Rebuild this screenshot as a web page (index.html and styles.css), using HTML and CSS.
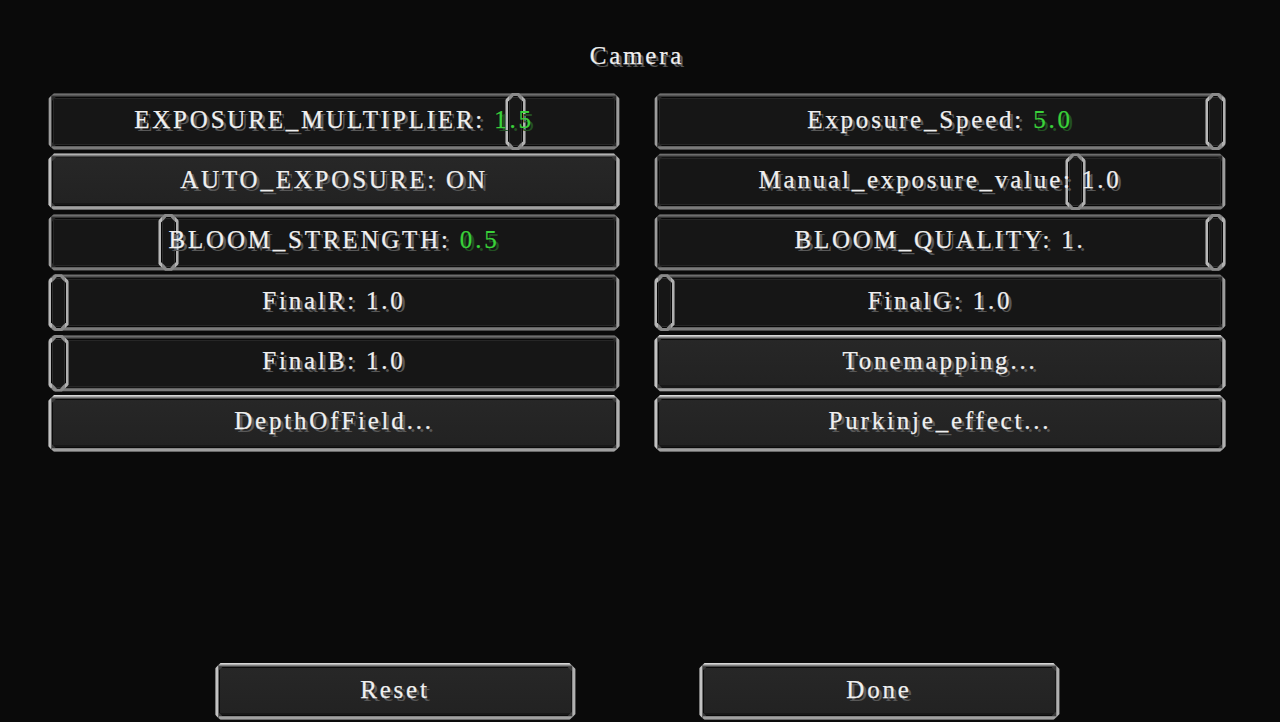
FILE: index.html
```html
<!DOCTYPE html>
<html lang="en">
<head>
<meta charset="utf-8">
<title>Camera</title>
<link rel="stylesheet" href="styles.css">
</head>
<body>
<div class="screen">
  <div class="title">Camera</div>
  <div class="grid">
    <div class="w slider"><span class="knob" style="left:457px"></span><span class="label">EXPOSURE_MULTIPLIER: <span class="val">1.5</span></span></div>
    <div class="w slider"><span class="knob" style="left:551px"></span><span class="label">Exposure_Speed: <span class="val">5.0</span></span></div>
    <div class="w button"><span class="label">AUTO_EXPOSURE: ON</span></div>
    <div class="w slider"><span class="knob" style="left:411px"></span><span class="label">Manual_exposure_value: 1.0</span></div>
    <div class="w slider"><span class="knob" style="left:110px"></span><span class="label">BLOOM_STRENGTH: <span class="val">0.5</span></span></div>
    <div class="w slider"><span class="knob" style="left:551px"></span><span class="label">BLOOM_QUALITY: 1.</span></div>
    <div class="w slider"><span class="knob" style="left:0px"></span><span class="label">FinalR: 1.0</span></div>
    <div class="w slider"><span class="knob" style="left:0px"></span><span class="label">FinalG: 1.0</span></div>
    <div class="w slider"><span class="knob" style="left:0px"></span><span class="label">FinalB: 1.0</span></div>
    <div class="w button"><span class="label">Tonemapping...</span></div>
    <div class="w button"><span class="label">DepthOfField...</span></div>
    <div class="w button"><span class="label">Purkinje_effect...</span></div>
  </div>
  <div class="footer">
    <div class="w button wide"><span class="label">Reset</span></div>
    <div class="w button wide"><span class="label">Done</span></div>
  </div>
</div>
</body>
</html>
```

FILE: styles.css
```css
html, body {
  margin: 0;
  padding: 0;
  background: #0a0a0a;
}

body {
  font-family: "Liberation Serif", "Times New Roman", serif;
  font-size: 25px;
  color: #f0f0f0;
  letter-spacing: 2.8px;
}

.screen {
  box-sizing: border-box;
  width: 1280px;
  height: 722px;
  padding: 41px 54px 2px 48px;
  display: flex;
  flex-direction: column;
  overflow: hidden;
}

.title {
  text-align: center;
  line-height: 29px;
  margin-bottom: 23px;
  -webkit-text-stroke: 0.25px #f0f0f0;
  text-shadow: 3px 3px 0 #585858;
}

.grid {
  display: grid;
  grid-template-columns: 572px 572px;
  column-gap: 34px;
  row-gap: 3.4px;
}

.footer {
  margin-top: auto;
  display: flex;
  justify-content: center;
  gap: 123px;
}

.w {
  position: relative;
  box-sizing: border-box;
  height: 57px;
  display: flex;
  align-items: center;
  justify-content: center;
  padding-bottom: 4px;
  white-space: nowrap;
}

.wide {
  width: 361px;
}

.w::before,
.w::after,
.knob,
.knob::after {
  content: "";
  position: absolute;
  clip-path: polygon(var(--c) 0, calc(100% - var(--c)) 0, 100% var(--c), 100% calc(100% - var(--c)), calc(100% - var(--c)) 100%, var(--c) 100%, 0 calc(100% - var(--c)), 0 var(--c));
}

.w::before {
  --c: 6px;
  inset: 0;
}

.w::after {
  --c: 4px;
  inset: 4px;
}

/* slider look */
.slider::before {
  background:
    linear-gradient(to right, #3c3c3c 0 1px, #9c9c9c 1px 3px, #4a4a4a 3px 4px, transparent 4px calc(100% - 4px), #4a4a4a calc(100% - 4px), #9c9c9c calc(100% - 3px) calc(100% - 1px), #3c3c3c calc(100% - 1px)),
    linear-gradient(#4a4a4a 0 1px, #6e6e6e 1px 2px, #555 2px 3px, #333 3px 4px, #2a2a2a 4px calc(100% - 4px), #4a4a4a calc(100% - 4px), #7a7a7a calc(100% - 3px) calc(100% - 1px), #4a4a4a calc(100% - 1px));
}

.slider::after {
  background: #161616;
  box-shadow: inset 0 0 0 1px #070707, inset 0 0 0 2px #262626;
}

/* button look */
.button::before {
  background:
    linear-gradient(to right, #7a7a7a 0 1px, #c2c2c2 1px 3px, #666 3px 4px, transparent 4px calc(100% - 4px), #666 calc(100% - 4px), #b0b0b0 calc(100% - 3px) calc(100% - 1px), #777 calc(100% - 1px)),
    linear-gradient(#d6d6d6 0 1px, #b2b2b2 1px 2px, #808080 2px 3px, #4a4a4a 3px 4px, #3a3a3a 4px calc(100% - 4px), #6a6a6a calc(100% - 4px), #a0a0a0 calc(100% - 3px) calc(100% - 1px), #6a6a6a calc(100% - 1px));
}

.button::after {
  background: linear-gradient(#272727, #222);
  box-shadow: inset 0 0 0 1px #0a0a0a, inset 0 -2px 0 1px #181818;
}

.knob {
  --c: 7px;
  top: 0;
  bottom: 0;
  width: 21px;
  z-index: 1;
  background: linear-gradient(to right, #6a6a6a 0 1px, #b8b8b8 1px 4px, #8a8a8a 4px calc(100% - 4px), #b0b0b0 calc(100% - 4px) calc(100% - 1px), #6a6a6a calc(100% - 1px));
}

.knob::after {
  --c: 6px;
  inset: 3px;
  background: #161616;
  box-shadow: inset 0 0 0 1px #050505, inset 0 0 0 2px #2c2c2c;
}

.label {
  position: relative;
  z-index: 2;
  -webkit-text-stroke: 0.25px #f0f0f0;
  text-shadow: 3px 3px 0 #585858;
}

.val {
  color: #3ad23a;
  -webkit-text-stroke: 0.25px #3ad23a;
  text-shadow: 3px 3px 0 #234f23;
}
```
